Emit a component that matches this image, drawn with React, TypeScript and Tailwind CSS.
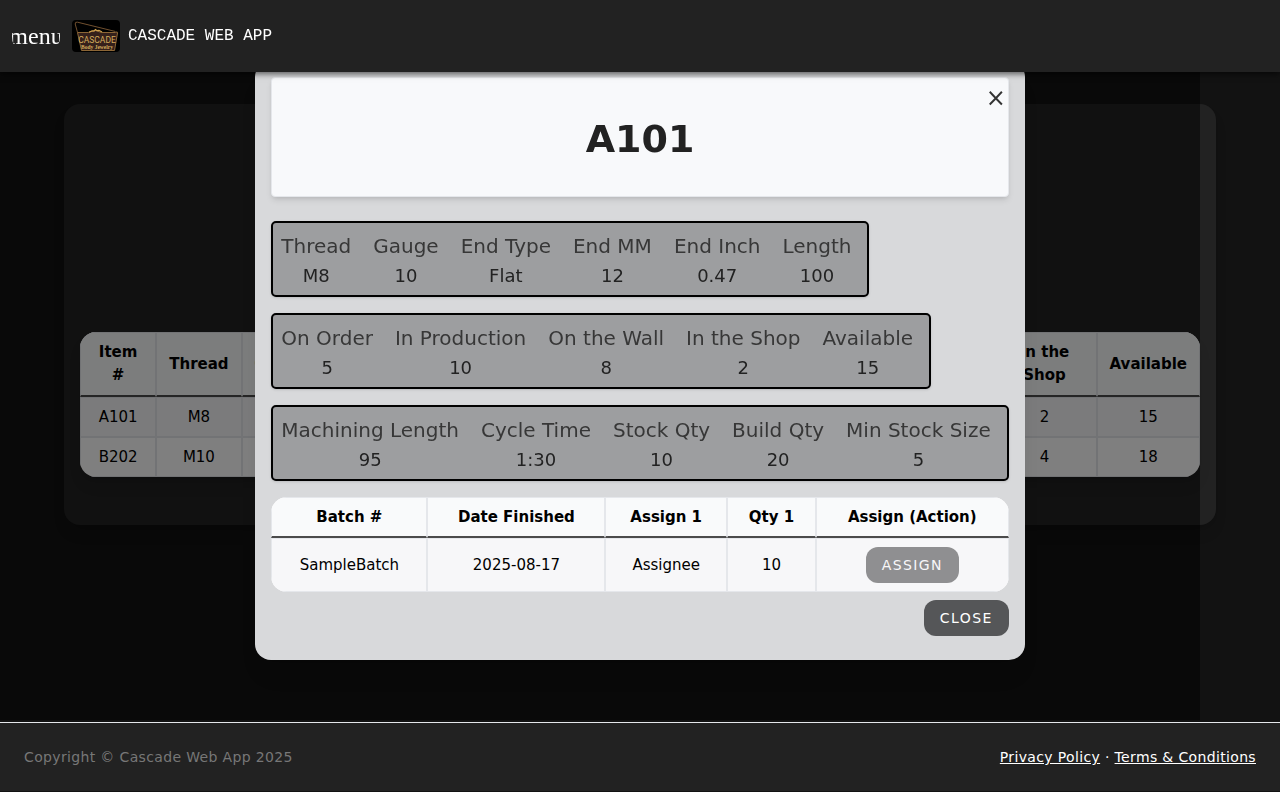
type Spec = { label: string; value: string };

const specGroups: { name: string; items: Spec[] }[] = [
  {
    name: 'Dimensions',
    items: [
      { label: 'Thread', value: 'M8' },
      { label: 'Gauge', value: '10' },
      { label: 'End Type', value: 'Flat' },
      { label: 'End MM', value: '12' },
      { label: 'End Inch', value: '0.47' },
      { label: 'Length', value: '100' },
    ],
  },
  {
    name: 'Inventory',
    items: [
      { label: 'On Order', value: '5' },
      { label: 'In Production', value: '10' },
      { label: 'On the Wall', value: '8' },
      { label: 'In the Shop', value: '2' },
      { label: 'Available', value: '15' },
    ],
  },
  {
    name: 'Production',
    items: [
      { label: 'Machining Length', value: '95' },
      { label: 'Cycle Time', value: '1:30' },
      { label: 'Stock Qty', value: '10' },
      { label: 'Build Qty', value: '20' },
      { label: 'Min Stock Size', value: '5' },
    ],
  },
];

const stockColumns = [
  'Item #', 'Thread', 'Gauge', 'End Type', 'End MM', 'End Inch', 'Length',
  'On Order', 'In Production', 'On the Wall', 'In the Shop', 'Available',
];

const stockRows = [
  ['A101', 'M8', '10', 'Flat', '12', '0.47', '100', '5', '10', '8', '2', '15'],
  ['B202', 'M10', '12', 'Round', '14', '0.55', '120', '3', '7', '6', '4', '18'],
];

const batchColumns = ['Batch #', 'Date Finished', 'Assign 1', 'Qty 1', 'Assign (Action)'];
const batchRows = [['SampleBatch', '2025-08-17', 'Assignee', '10']];

const headCell = 'border border-b-2 border-[#e5e7eb] border-b-[#4b4b4b] bg-[#f9fafb] px-3 py-2 font-bold';
const bodyCell = 'border border-[#e5e7eb] px-3 py-2';

function Logo() {
  return (
    <svg viewBox="0 0 48 32" className="h-8 w-12 rounded" role="img" aria-label="Cascade Body Jewelry">
      <rect width="48" height="32" fill="#000" />
      <path d="M5.5 12.5 3.2 4Q3 1.6 5.5 2.2L43.5 11.5" fill="none" stroke="#71502f" strokeWidth="1" />
      <path d="M5.5 12.5h11l3.5-1.2 3-1.2 3 1.2 3.5 1.2h14Q45.700 11 45.500 13L42.500 30.500h-33Z" fill="#35201b" stroke="#8c6636" strokeWidth="1" />
      <path d="m17 12.300 3-1.500 2 .3 1.500-1.600 1.500 1.200 2-.4 3 1.700" fill="none" stroke="#d3a350" strokeWidth="1.200" />
      <text x="25" y="22.500" textAnchor="middle" fill="#d3ab5c" fontFamily="Roboto, sans-serif" fontSize="8.500">CASCADE</text>
      <text x="25" y="28.500" textAnchor="middle" fill="#d3ab5c" fontFamily="Liberation Serif, serif" fontSize="5.500" fontWeight="bold">Body Jewelry</text>
    </svg>
  );
}

function StockTable() {
  return (
    <table className="w-full border-separate border-spacing-0 overflow-hidden rounded-2xl bg-white text-center text-[15px] text-black shadow-lg">
      <thead className="leading-[23px]">
        <tr>
          {stockColumns.map((c) => (
            <th key={c} scope="col" className={headCell}>{c}</th>
          ))}
        </tr>
      </thead>
      <tbody className="leading-[22px]">
        {stockRows.map((row) => (
          <tr key={row[0]} className="odd:bg-[#f7f7f9]">
            {row.map((v, i) => (
              <td key={stockColumns[i]} className={bodyCell}>{v}</td>
            ))}
          </tr>
        ))}
      </tbody>
    </table>
  );
}

function SpecGroup({ name, items }: { name: string; items: Spec[] }) {
  return (
    <dl
      aria-label={name}
      className="flex w-fit gap-[22px] rounded-[5px] border-2 border-black bg-[#9d9ea0] pt-2 pr-4 pb-1 pl-2 text-center shadow-sm"
    >
      {items.map((s) => (
        <div key={s.label}>
          <dt className="text-xl leading-[30px] whitespace-nowrap text-[#373737]">{s.label}</dt>
          <dd className="text-lg leading-[30px] text-[#222222]">{s.value}</dd>
        </div>
      ))}
    </dl>
  );
}

function ItemDialog() {
  return (
    <div className="fixed inset-x-0 top-0 bottom-[72px] z-10 flex items-center justify-center">
      <section
        role="dialog"
        aria-labelledby="item-title"
        className="rounded-2xl bg-[#d8d9db] px-4 pt-4 pb-6 shadow-xl"
      >
        <header className="relative mb-6 rounded border border-[#e5e7eb] bg-[#f8f9fb] pt-9 pb-8 text-center shadow-md">
          <h1 id="item-title" className="text-[38px] leading-[50px] font-bold text-[#222222]">A101</h1>
          <button type="button" aria-label="Close dialog" className="absolute top-1 right-0.5 h-8 w-5 text-2xl leading-8 text-[#333333]">
            ×
          </button>
        </header>
        <div className="flex flex-col gap-4">
          {specGroups.map((g) => (
            <SpecGroup key={g.name} name={g.name} items={g.items} />
          ))}
          <table className="w-full border-separate border-spacing-0 overflow-hidden rounded-2xl bg-white text-center text-[15px] leading-[22px] text-black">
            <thead>
              <tr>
                {batchColumns.map((c) => (
                  <th key={c} scope="col" className={headCell}>{c}</th>
                ))}
              </tr>
            </thead>
            <tbody>
              {batchRows.map((row) => (
                <tr key={row[0]} className="odd:bg-[#f7f7f9]">
                  {row.map((v, i) => (
                    <td key={batchColumns[i]} className={bodyCell}>{v}</td>
                  ))}
                  <td className={bodyCell}>
                    <button type="button" className="h-9 rounded-xl bg-[#8f8f91] px-4 align-middle text-sm tracking-widest text-[#f7f7f9]">
                      ASSIGN
                    </button>
                  </td>
                </tr>
              ))}
            </tbody>
          </table>
        </div>
        <div className="mt-2 flex justify-end">
          <button type="button" className="h-9 rounded-xl bg-[#555658] px-4 text-sm tracking-widest text-white">
            CLOSE
          </button>
        </div>
      </section>
    </div>
  );
}

export default function App() {
  return (
    <div className="flex min-h-screen flex-col bg-[#121212] font-['DejaVu_Sans',sans-serif]">
      <header className="relative z-20 flex h-[72px] items-center bg-[#222222] pl-3 text-white shadow-[0_2px_6px_rgba(0,0,0,0.6)]">
        <button type="button" className="mr-3 flex h-12 w-12 items-center justify-center overflow-hidden rounded-full font-['Liberation_Serif',serif] text-2xl">
          menu
        </button>
        <Logo />
        <span className="ml-2 font-['Liberation_Mono',monospace] text-base">CASCADE WEB APP</span>
      </header>

      <main className="flex-1 px-16 py-8">
        <section className="rounded-2xl bg-[#222222] px-4 pt-[228px] pb-12 shadow-lg">
          <StockTable />
        </section>
      </main>

      <div className="fixed top-0 right-20 bottom-[72px] left-0 z-10 bg-black/50" />
      <ItemDialog />

      <footer className="relative z-20 mb-px flex h-[69px] items-center justify-between border-t border-[#e5e7eb] bg-[#222222] px-6 text-sm">
        <p className="tracking-wide text-[#777777]">Copyright © Cascade Web App 2025</p>
        <p className="tracking-wide text-white">
          <a href="#privacy" className="underline">Privacy Policy</a> · <a href="#terms" className="underline">Terms &amp; Conditions</a>
        </p>
      </footer>
    </div>
  );
}
